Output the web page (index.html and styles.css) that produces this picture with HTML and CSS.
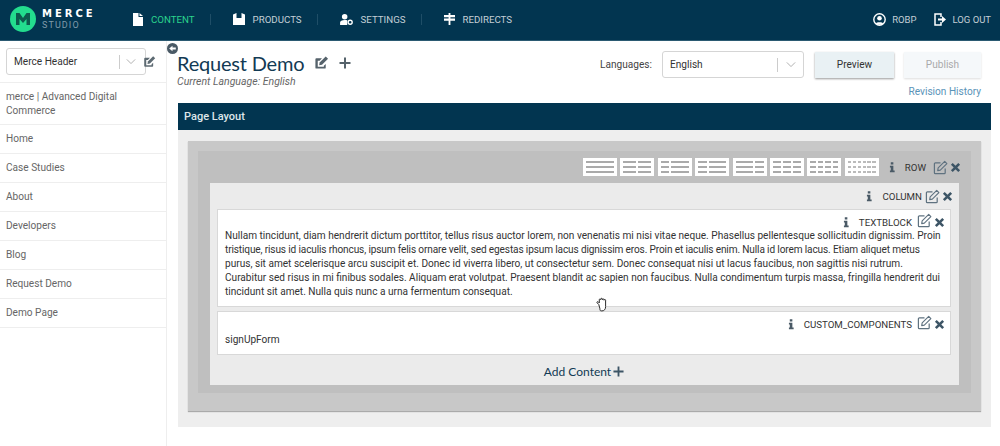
FILE: index.html
```html
<!DOCTYPE html>
<html lang="en">
<head>
  <meta charset="UTF-8" />
  <title>Merce Studio</title>
  <link rel="stylesheet" href="styles.css">
</head>
<body>
  <svg class="defs" width="0" height="0">
    <symbol id="edit" viewBox="0 0 16 16">
      <path d="M13 9v4.500a1 1 0 0 1-1 1H2.500a1 1 0 0 1-1-1V4a1 1 0 0 1 1-1H8" fill="none" stroke="currentColor" stroke-width="1.300"/>
      <path d="M5.500 8.500 12.500 1.500 14.800 3.800 7.800 10.800 5 11.300Z" fill="none" stroke="currentColor" stroke-width="1.200" stroke-linejoin="round"/>
    </symbol>
    <symbol id="edit-solid" viewBox="0 0 16 16">
      <path d="M12.500 9.500v4a1 1 0 0 1-1 1H2.500a1 1 0 0 1-1-1V4.500a1 1 0 0 1 1-1h6L6 6H4v6.500h6.500v-1Z" fill="currentColor"/>
      <path d="M6 8 12.500 1.500 15 4 8.500 10.500 5.500 11Z" fill="currentColor"/>
    </symbol>
    <symbol id="close" viewBox="0 0 12 12">
      <path d="M2 2 10 10M10 2 2 10" fill="none" stroke="currentColor" stroke-width="2.800"/>
    </symbol>
    <symbol id="info" viewBox="0 0 8 14">
      <path d="M2 1.500h3v2.500H2ZM1 5.500h4V11h1.500v2h-5.500v-2H2V7.500H1Z" fill="currentColor"/>
    </symbol>
    <symbol id="chev" viewBox="0 0 12 8">
      <path d="M1 1.500 6 6.500 11 1.500" fill="none" stroke="currentColor" stroke-width="1.100"/>
    </symbol>
    <symbol id="plus" viewBox="0 0 12 12">
      <path d="M6 .5v11M.5 6h11" fill="none" stroke="currentColor" stroke-width="2"/>
    </symbol>
  </svg>

  <header class="topbar">
    <div class="logo">
      <div class="logo-mark">
        <svg width="16" height="14" viewBox="0 0 16 14"><path d="M1 1h3.500L8 6l3.500-5H15v12h-3.500V7L8 11 4.500 7v6H1Z" fill="#0d5a4e"/></svg>
      </div>
      <div class="logo-text">
        <div class="logo-name">MERCE</div>
        <div class="logo-sub">STUDIO</div>
      </div>
    </div>
    <nav class="nav">
      <a class="nav-item active">
        <svg width="10" height="13" viewBox="0 0 10 13"><path d="M0 0h5.500v4H10v9H0ZM6.500 0 10 3H6.500Z" fill="#fff"/></svg>
        CONTENT
      </a>
      <a class="nav-item">
        <svg width="12" height="12" viewBox="0 0 12 12"><path d="M0 1.500 3.500 0v5h5V0L12 1.500V12H0Z" fill="#fff"/></svg>
        PRODUCTS
      </a>
      <a class="nav-item">
        <svg width="13" height="11" viewBox="0 0 14 12"><circle cx="5" cy="3" r="3" fill="#fff"/><path d="M0 12V9.500C0 7.500 2 6.500 5 6.500c1 0 2 .1 2.800.4V12Z" fill="#fff"/><circle cx="11" cy="9" r="2.200" fill="none" stroke="#fff" stroke-width="1.500"/></svg>
        SETTINGS
      </a>
      <a class="nav-item">
        <svg width="11" height="12" viewBox="0 0 12 13"><path d="M5 0h2v2h5v2.500H7v1.500h5v2.500H7V13H5V8.500H0V6h5V4.500H0V2h5Z" fill="#fff"/></svg>
        REDIRECTS
      </a>
    </nav>
    <div class="user">
      <a class="user-item">
        <svg width="13" height="13" viewBox="0 0 13 13"><circle cx="6.500" cy="6.500" r="5.700" fill="none" stroke="#fff" stroke-width="1.400"/><circle cx="6.500" cy="5.200" r="2.300" fill="#fff"/><path d="M2.800 10.500C3.500 8.800 9.500 8.800 10.200 10.500 8 12.300 5 12.300 2.800 10.500Z" fill="#fff"/></svg>
        ROBP
      </a>
      <a class="user-item">
        <svg width="12" height="13" viewBox="0 0 12 13"><path d="M7 4V1H1v11h6V9" fill="none" stroke="#fff" stroke-width="1.500"/><path d="M4 5.500h4V3l4 3.500L8 10V7.500H4Z" fill="#fff"/></svg>
        LOG OUT
      </a>
    </div>
  </header>

  <div class="app">
    <aside class="sidebar">
      <div class="side-head">
        <div class="select side-select">
          <span class="select-value">Merce Header</span>
          <span class="select-arrow"><svg width="10" height="7"><use href="#chev"/></svg></span>
        </div>
        <svg class="side-edit" width="13" height="13"><use href="#edit-solid"/></svg>
      </div>
      <ul class="pages">
        <li>merce | Advanced Digital Commerce</li>
        <li>Home</li>
        <li>Case Studies</li>
        <li>About</li>
        <li>Developers</li>
        <li>Blog</li>
        <li>Request Demo</li>
        <li>Demo Page</li>
      </ul>
    </aside>

    <main class="main">
      <button class="collapse">
        <svg width="11" height="11" viewBox="0 0 10 10"><circle cx="5" cy="5" r="5" fill="#4a5a66"/><path d="M2 5 5 2.500V4h3v2H5v1.500Z" fill="#fff"/></svg>
      </button>
      <div class="page-head">
        <div class="title-col">
          <div class="title-row">
            <h1>Request Demo</h1>
            <svg class="title-edit" width="15" height="15"><use href="#edit-solid"/></svg>
            <svg class="title-plus" width="12" height="12"><use href="#plus"/></svg>
          </div>
          <div class="current-lang">Current Language: English</div>
        </div>
        <div class="actions">
          <div class="actions-row">
            <span class="lang-label">Languages:</span>
            <div class="select lang-select">
              <span class="select-value">English</span>
              <span class="select-arrow"><svg width="10" height="7"><use href="#chev"/></svg></span>
            </div>
            <button class="btn">Preview</button>
            <button class="btn btn-off">Publish</button>
          </div>
          <a class="revisions">Revision History</a>
        </div>
      </div>

      <section class="layout">
        <div class="layout-title">Page Layout</div>
        <div class="layout-body">
          <div class="row-outer">
            <div class="row-inner">
              <div class="toolbar row-bar">
                <div class="grids">
                  <span class="grid-btn"><i></i></span>
                  <span class="grid-btn"><i></i><i></i></span>
                  <span class="grid-btn"><i></i><i class="wide"></i></span>
                  <span class="grid-btn"><i></i><i class="wide"></i></span>
                  <span class="grid-btn"><i class="wide"></i><i></i></span>
                  <span class="grid-btn"><i></i><i></i><i></i></span>
                  <span class="grid-btn"><i></i><i></i><i></i><i></i></span>
                  <span class="grid-btn dense"><i></i><i></i><i></i><i></i><i></i><i></i></span>
                </div>
                <svg class="ico-info" width="7" height="12"><use href="#info"/></svg>
                <span class="tb-label">ROW</span>
                <svg class="ico-edit" width="15" height="15"><use href="#edit"/></svg>
                <svg class="ico-close" width="11" height="11"><use href="#close"/></svg>
              </div>
              <div class="column">
                <div class="toolbar column-bar">
                  <svg class="ico-info" width="7" height="12"><use href="#info"/></svg>
                  <span class="tb-label">COLUMN</span>
                  <svg class="ico-edit" width="15" height="15"><use href="#edit"/></svg>
                  <svg class="ico-close" width="11" height="11"><use href="#close"/></svg>
                </div>
                <div class="block">
                  <div class="toolbar">
                    <svg class="ico-info" width="7" height="12"><use href="#info"/></svg>
                    <span class="tb-label">TEXTBLOCK</span>
                    <svg class="ico-edit" width="15" height="15"><use href="#edit"/></svg>
                    <svg class="ico-close" width="11" height="11"><use href="#close"/></svg>
                  </div>
                  <p>Nullam tincidunt, diam hendrerit dictum porttitor, tellus risus auctor lorem, non venenatis mi nisi vitae neque. Phasellus pellentesque sollicitudin dignissim. Proin<br>
                  <span class="tight">tristique, risus id iaculis rhoncus, ipsum felis ornare velit, sed egestas ipsum lacus dignissim eros. Proin et iaculis enim. Nulla id lorem lacus. Etiam aliquet metus</span><br>
                  purus, sit amet scelerisque arcu suscipit et. Donec id viverra libero, ut consectetur sem. Donec consequat nisi ut lacus faucibus, non sagittis nisi rutrum.<br>
                  Curabitur sed risus in mi finibus sodales. Aliquam erat volutpat. Praesent blandit ac sapien non faucibus. Nulla condimentum turpis massa, fringilla hendrerit dui<br>
                  tincidunt sit amet. Nulla quis nunc a urna fermentum consequat.</p>
                </div>
                <div class="block block-custom">
                  <div class="toolbar">
                    <svg class="ico-info" width="7" height="12"><use href="#info"/></svg>
                    <span class="tb-label">CUSTOM_COMPONENTS</span>
                    <svg class="ico-edit" width="15" height="15"><use href="#edit"/></svg>
                    <svg class="ico-close" width="11" height="11"><use href="#close"/></svg>
                  </div>
                  <p>signUpForm</p>
                </div>
                <div class="add-content">Add Content<svg class="add-plus" width="11" height="11"><use href="#plus"/></svg></div>
              </div>
            </div>
          </div>
        </div>
      </section>

      <svg class="hand" width="13" height="15" viewBox="0 0 12 14"><path d="M2.500 7 1 5.500C.4 4.900 1.200 4 2 4.500l1 1V2.500c0-1 1.300-1 1.400 0V2c0-1 1.500-1 1.500 0v.5c0-1 1.500-1 1.500 0V3c.1-.9 1.500-.9 1.500 0v6c0 2.500-1.300 4-3.500 4S3.800 12 3.500 10.500Z" fill="#fff" stroke="#222" stroke-width=".9"/></svg>
    </main>
  </div>
</body>
</html>
```

FILE: styles.css
```css
* {
  margin: 0;
  padding: 0;
  box-sizing: border-box;
}
html, body {
  height: 446px;
  overflow: hidden;
}
body {
  font-family: 'Roboto', sans-serif;
  background: #fff;
  color: #333;
  font-size: 10.1px;
}
.defs {
  position: absolute;
}

/* top bar */
.topbar {
  height: 41px;
  background: #023550;
  border-bottom: 1px solid #2b5a72;
  padding-bottom: 2px;
  display: flex;
  align-items: center;
  color: #c4cfd6;
}
.logo {
  width: 133px;
  padding-left: 10px;
  display: flex;
  align-items: center;
  gap: 6px;
}
.logo-mark {
  width: 26px;
  height: 26px;
  border-radius: 50%;
  background: #23dc8e;
  display: flex;
  align-items: center;
  justify-content: center;
}
.logo-name {
  font-family: 'DejaVu Sans', sans-serif;
  font-weight: 700;
  font-size: 10px;
  line-height: 12px;
  letter-spacing: 3px;
  color: #fff;
}
.logo-sub {
  font-size: 9px;
  line-height: 11px;
  letter-spacing: 1.100px;
  color: #7f9aaa;
}
.nav {
  display: flex;
  align-items: center;
}
.nav-item {
  display: flex;
  align-items: center;
  gap: 8px;
  font-size: 9.700px;
  padding-right: 15px;
  margin-right: 22px;
  height: 11px;
  border-right: 1px solid #1f4e67;
}
.nav-item:last-child {
  border-right: none;
}
.nav-item.active {
  color: #2bd48d;
}
.user {
  margin-left: auto;
  display: flex;
  gap: 18px;
  padding-right: 9px;
}
.user-item {
  display: flex;
  align-items: center;
  gap: 6px;
  font-size: 9.500px;
}

/* sidebar */
.app {
  display: flex;
  height: 405px;
}
.sidebar {
  width: 167px;
  flex: none;
  border-right: 1px solid #eee;
}
.side-head {
  display: flex;
  align-items: center;
  padding: 7px 0 7px 6px;
  border-bottom: 1px solid #eee;
}
.side-edit {
  margin-left: -3px;
  color: #5d6a72;
  position: relative;
}
.select {
  display: flex;
  align-items: center;
  height: 27px;
  border: 1px solid #d5d5d5;
  border-radius: 3px;
  background: #fff;
}
.select-value {
  flex: 1;
  padding-left: 7px;
}
.select-arrow {
  display: flex;
  align-items: center;
  justify-content: center;
  height: 14px;
  border-left: 1px solid #ccc;
  color: #aaa;
}
.side-select {
  width: 140px;
  height: 27px;
}
.side-select .select-arrow {
  width: 26px;
  justify-content: flex-start;
  padding-left: 6px;
}
.pages {
  list-style: none;
}
.pages li {
  padding: 7px 6px;
  line-height: 14px;
  border-bottom: 1px solid #eee;
  color: #666;
}
.pages li:first-child {
  padding: 7px 30px 6px 6px;
}

/* main column */
.main {
  flex: 1;
  min-width: 0;
  position: relative;
  padding: 0 9px 0 11px;
}
.collapse {
  position: absolute;
  left: 0;
  top: 2px;
  border: none;
  background: none;
  display: flex;
}
.page-head {
  height: 62px;
  display: flex;
  justify-content: space-between;
  align-items: flex-start;
}
.title-col {
  margin-left: -1px;
}
.title-row {
  display: flex;
  align-items: center;
  padding-top: 9px;
  height: 34px;
}
h1 {
  font-family: 'Lato', sans-serif;
  font-weight: 400;
  font-size: 20px;
  color: #123a54;
  letter-spacing: -.2px;
}
.title-edit {
  margin-left: 10px;
  color: #55626b;
}
.title-plus {
  margin-left: 10px;
  color: #55626b;
}
.current-lang {
  font-size: 10.500px;
  font-style: italic;
  color: #666;
}
.actions {
  display: flex;
  flex-direction: column;
  align-items: flex-end;
  padding-right: 10px;
  padding-top: 10px;
}
.actions-row {
  display: flex;
  align-items: center;
}
.lang-label {
  margin-right: 10px;
  color: #444;
}
.lang-select {
  width: 142px;
  height: 27px;
  margin-right: 11px;
}
.lang-select .select-arrow {
  width: 26px;
}
.btn {
  width: 79px;
  height: 26px;
  border: none;
  background: #e9f1f4;
  box-shadow: 0 1px 2px #999;
  font: inherit;
  color: #333;
  margin-right: 10px;
}
.btn:last-child {
  margin-right: 0;
  width: 77px;
}
.btn-off {
  background: #f5f8fa;
  box-shadow: 0 1px 2px #ddd;
  color: #aaa;
}
.revisions {
  margin-top: 8px;
  color: #5a93b8;
}

/* page layout */
.layout-title {
  height: 27px;
  background: #023550;
  color: #dfe6ea;
  font-size: 11px;
  font-weight: 500;
  line-height: 28px;
  padding-left: 6px;
}
.layout-body {
  background: #eee;
  padding: 11px 10px 16px;
}
.row-outer {
  background: #c8c8c8;
  padding: 10px 10px 18px;
  box-shadow: 0 1px 1px #aaa;
}
.row-inner {
  background: #bfbfbf;
  padding: 0 12px 8px;
}
.toolbar {
  display: flex;
  align-items: center;
  justify-content: flex-end;
  height: 26px;
  gap: 6px;
}
.row-bar {
  height: 32px;
  margin-right: -2px;
}
.grids {
  display: flex;
  gap: 3.400px;
  margin-right: 4px;
}
.grid-btn {
  display: flex;
  gap: 2px;
  width: 34px;
  height: 18px;
  background: #fff;
  padding: 3px 3px 0;
}
.grid-btn i {
  flex: 1;
  height: 12px;
  background: repeating-linear-gradient(#aaa 0 1.500px, transparent 1.500px 5px);
}
.grid-btn i.wide {
  flex: 2;
}
.grid-btn.dense {
  gap: 1.500px;
}
.grid-btn.dense i {
  background: repeating-linear-gradient(#bbb 0 1.500px, transparent 1.500px 5px);
}
.ico-info {
  color: #4a5a66;
  margin-right: 3px;
}
.tb-label {
  font-size: 9.700px;
  color: #333;
  margin-right: -1px;
}
.row-bar .tb-label {
  margin-right: 1px;
}
.ico-edit {
  color: #5f7280;
}
.ico-close {
  color: #3d5566;
  margin-left: -4px;
}
.column {
  background: #ebebeb;
  padding: 0 8px 0 7px;
}
.column-bar {
  margin-right: -2px;
}
.column-bar .tb-label {
  margin-right: -3px;
}
.block {
  background: #fff;
  border: 1px solid #d8d8d8;
  padding: 0 7px;
  margin-bottom: 4px;
}
.block .toolbar {
  height: 19px;
  align-items: flex-end;
  margin-right: -2px;
  padding-bottom: 1px;
}
.block p {
  line-height: 14px;
  padding-bottom: 7px;
  color: #333;
  white-space: nowrap;
}
.tight {
  letter-spacing: -.14px;
}
.block-custom p {
  padding-top: 2px;
}
.add-content {
  font-family: 'Lato', sans-serif;
  font-size: 12px;
  color: #123a54;
  height: 26px;
  padding-bottom: 2px;
  display: flex;
  align-items: center;
  justify-content: center;
  gap: 2px;
}
.add-plus {
  color: #3d5566;
}
.hand {
  position: absolute;
  left: 429px;
  top: 256px;
}
```
